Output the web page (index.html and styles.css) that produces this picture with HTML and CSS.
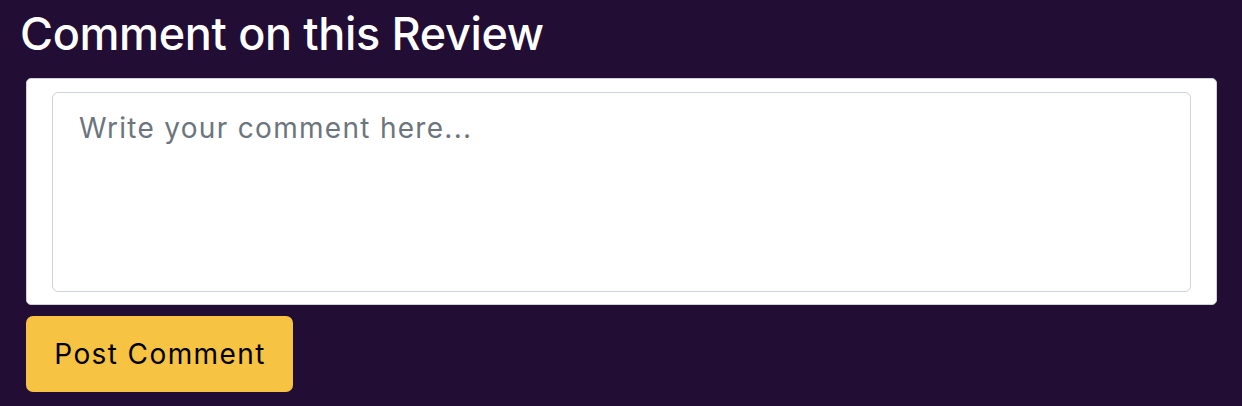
FILE: index.html
```html
<!DOCTYPE html>
<html lang="en">
<head>
<meta charset="utf-8">
<title>Comment on this Review</title>
<link rel="stylesheet" href="styles.css">
</head>
<body>
<section class="comment-section">
  <h2 class="comment-title">Comment on this Review</h2>
  <form class="comment-form">
    <div class="comment-card">
      <textarea class="comment-input" placeholder="Write your comment here..."></textarea>
    </div>
    <button type="button" class="post-btn">Post Comment</button>
  </form>
</section>
</body>
</html>
```
FILE: styles.css
```css
* { box-sizing: border-box; }
html, body {
  margin: 0;
  padding: 0;
  background: #220d35;
  height: 100%;
}
body {
  font-family: Inter, "Noto Sans", "Liberation Sans", sans-serif;
}
.comment-section {
  padding: 7px 25px 0 20px;
}
.comment-title {
  margin: 0;
  color: #ffffff;
  font-size: 45px;
  font-weight: 500;
  line-height: 54px;
  letter-spacing: -0.35px;
}
.comment-form {
  margin: 17px 0 0 6px;
  display: flex;
  flex-direction: column;
  align-items: flex-start;
}
.comment-card {
  width: 100%;
  background: #ffffff;
  border: 1px solid #cfd3d8;
  border-radius: 5px;
  padding: 13px 25px 12px 25px;
}
.comment-input {
  display: block;
  width: 100%;
  height: 200px;
  border: 1px solid #ced4da;
  border-radius: 6px;
  padding: 14px 26px;
  font-family: inherit;
  font-size: 28px;
  letter-spacing: 1.3px;
  line-height: 1.5;
  color: #212529;
  resize: none;
  outline: none;
  background: #fff;
}
.comment-input::placeholder {
  color: #6c757d;
  opacity: 1;
}
.post-btn {
  margin-top: 11px;
  width: 267px;
  height: 76px;
  background: #f6c343;
  border: none;
  border-radius: 7px;
  font-family: inherit;
  font-size: 28px;
  letter-spacing: 1.4px;
  color: #000;
  padding: 0 0 0 1px;
  text-align: center;
}
```
